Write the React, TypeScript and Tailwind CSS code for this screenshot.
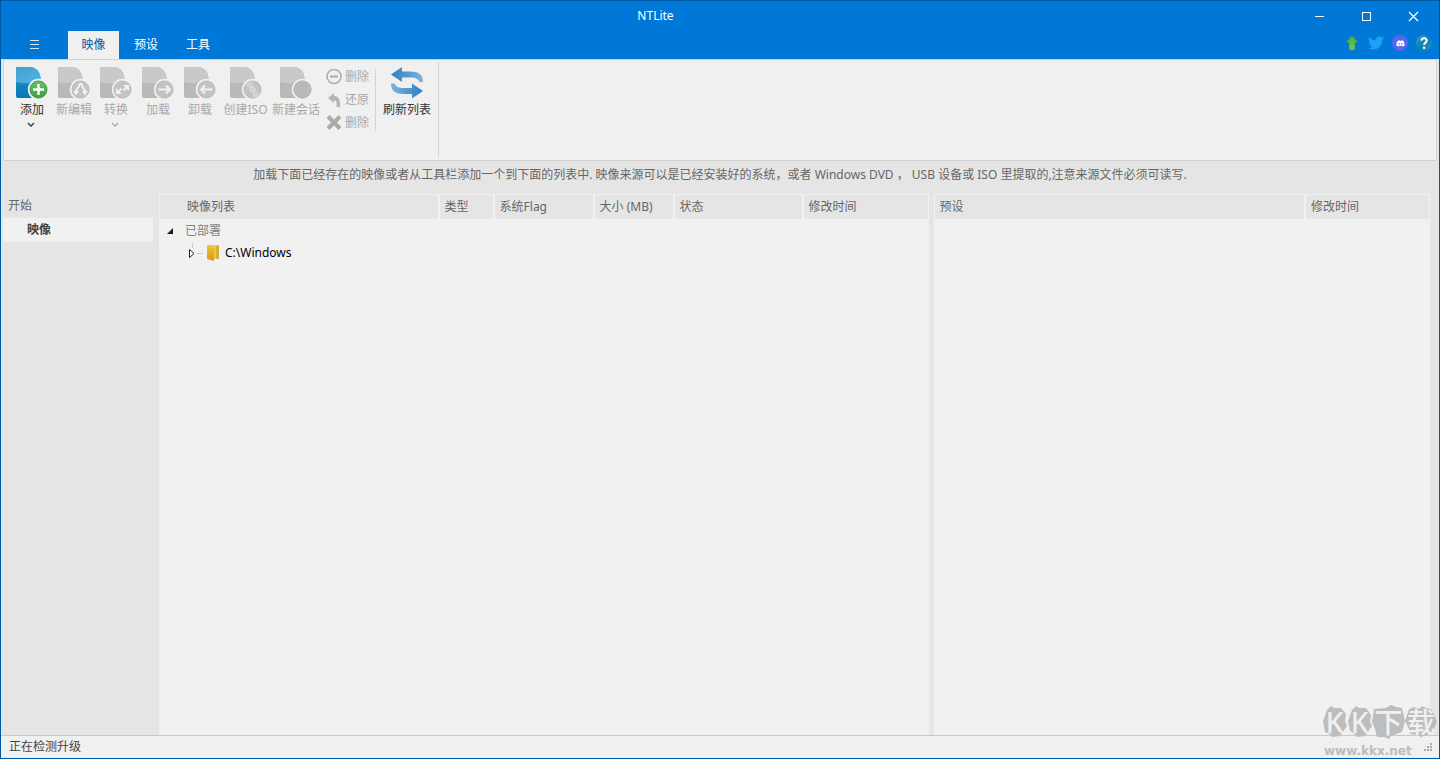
import type { ReactNode } from "react";
import { FaDiscord, FaTwitter } from "react-icons/fa6";

const tabs = ["映像", "预设", "工具"];

const imageColumns = [
  { label: "映像列表", width: "" },
  { label: "类型", width: "w-[55px]" },
  { label: "系统Flag", width: "w-[100px]" },
  { label: "大小 (MB)", width: "w-[80px]" },
  { label: "状态", width: "w-[129px]" },
  { label: "修改时间", width: "w-[124px]" },
];

const presetColumns = [
  { label: "预设", width: "" },
  { label: "修改时间", width: "w-[123px]" },
];

const Gradients = () => (
  <svg className="absolute size-0" aria-hidden="true">
    <defs>
      <linearGradient id="page-blue" x1="0" y1="0" x2="0" y2="1">
        <stop offset="0" stopColor="#2f93c8" />
        <stop offset="1" stopColor="#0079b8" />
      </linearGradient>
      <linearGradient id="gloss-blue" x1="0" y1="0" x2="1" y2="1">
        <stop offset="0" stopColor="#479fce" />
        <stop offset="1" stopColor="#49b5e8" />
      </linearGradient>
      <linearGradient id="green" x1="0" y1="0" x2="0" y2="1">
        <stop offset="0" stopColor="#67c463" />
        <stop offset="1" stopColor="#37a13a" />
      </linearGradient>
      <linearGradient id="arrow-green" x1="0" y1="0" x2="0" y2="1">
        <stop offset="0" stopColor="#46b03c" />
        <stop offset="1" stopColor="#6cc85a" />
      </linearGradient>
      <linearGradient id="help-blue" x1="0" y1="0" x2="1" y2="1">
        <stop offset="0" stopColor="#3f9fcb" />
        <stop offset="0.5" stopColor="#0a7fb4" />
        <stop offset="1" stopColor="#1699c2" />
      </linearGradient>
      <linearGradient id="sync-a" x1="0" y1="0" x2="1" y2="0">
        <stop offset="0" stopColor="#2f7fc0" />
        <stop offset="1" stopColor="#7db4e0" />
      </linearGradient>
      <linearGradient id="sync-b" x1="0" y1="0" x2="1" y2="0">
        <stop offset="0" stopColor="#7db4e0" />
        <stop offset="1" stopColor="#2f7fc0" />
      </linearGradient>
      <linearGradient id="folder" x1="0" y1="0" x2="0" y2="1">
        <stop offset="0" stopColor="#f0c330" />
        <stop offset="1" stopColor="#d99a1c" />
      </linearGradient>
    </defs>
  </svg>
);

const PageIcon = ({ active, children }: { active?: boolean; children?: ReactNode }) => (
  <svg width="32" height="32" viewBox="0 0 32 32" fill="none" aria-hidden="true">
    <path d="M0 0H14C20 0 24.5 5 24.5 12V31H2Q0 31 0 29Z" fill={active ? "url(#page-blue)" : "#b9b9b9"} />
    <path d="M0 0H14C20 0 24.5 5 24.5 12C18 17 8 17 0 15Z" fill={active ? "url(#gloss-blue)" : "#c9c9c9"} />
    <circle cx="22.5" cy="22.5" r="10.7" fill="#f0f0f0" />
    <circle cx="22.5" cy="22.5" r="8.5" fill={active ? "url(#green)" : "#c3c3c3"} stroke={active ? "#4a914c" : "#b8b8b8"} />
    {children}
  </svg>
);

const RibbonButton = ({
  label,
  icon,
  width,
  active,
  menu,
}: {
  label: string;
  icon: ReactNode;
  width: string;
  active?: boolean;
  menu?: boolean;
}) => (
  <button
    type="button"
    disabled={!active}
    className={`flex shrink-0 flex-col items-center whitespace-nowrap ${width} ${active ? "text-[#333333]" : "text-[#a8a8a8]"}`}
  >
    {icon}
    <span className="mt-[3px] h-4 leading-4">{label}</span>
    {menu && (
      <svg width="8" height="5" viewBox="0 0 8 5" className="mt-1 mr-0.5" fill="none" stroke="currentColor" strokeWidth="1.3">
        <path d="M1 1L4 4L7 1" />
      </svg>
    )}
  </button>
);

const SmallButton = ({ label, children }: { label: string; children: ReactNode }) => (
  <button type="button" disabled className="flex h-[23px] shrink-0 items-center gap-[3px] text-[#a8a8a8]">
    <svg width="16" height="16" viewBox="0 0 16 16" fill="none" aria-hidden="true">
      {children}
    </svg>
    {label}
  </button>
);

const HeaderRow = ({ columns, first }: { columns: typeof imageColumns; first: string }) => (
  <thead>
    <tr className="h-6">
      {columns.map((column, index) => (
        <th
          key={column.label}
          className={`border-[#f1f1f1] bg-[#e5e5e5] text-left font-normal whitespace-nowrap text-[#666666] ${column.width} ${
            index === 0 ? first : "pl-[5px]"
          } ${index < columns.length - 1 ? "border-r-2" : ""}`}
        >
          {column.label}
        </th>
      ))}
    </tr>
  </thead>
);

const TitleBar = () => (
  <header className="bg-[#0078d7] text-white">
    <div className="flex h-[30px] items-center pr-0.5">
      <h1 className="flex-1 pl-[14px] text-center">NTLite</h1>
      <button type="button" aria-label="Minimize" className="flex h-full w-[47px] items-center justify-center">
        <svg width="11" height="11" viewBox="0 0 11 11" stroke="white">
          <path d="M1 5.5H10" />
        </svg>
      </button>
      <button type="button" aria-label="Maximize" className="flex h-full w-[47px] items-center justify-center">
        <svg width="11" height="11" viewBox="0 0 11 11" fill="none" stroke="white">
          <rect x="1.5" y="1.5" width="8" height="8" />
        </svg>
      </button>
      <button type="button" aria-label="Close" className="flex h-full w-[47px] items-center justify-center">
        <svg width="11" height="11" viewBox="0 0 11 11" stroke="white" strokeWidth="1.2">
          <path d="M1 1L10 10M10 1L1 10" />
        </svg>
      </button>
    </div>
    <div className="flex h-7 items-stretch">
      <button type="button" aria-label="Menu" className="flex w-[67px] items-center justify-center pb-0.5">
        <svg width="9" height="9" viewBox="0 0 9 9" stroke="#d5e8f8">
          <path d="M0 0.5H9M0 4.5H9M0 8.5H9" />
        </svg>
      </button>
      {tabs.map((tab, index) => (
        <button
          key={tab}
          type="button"
          className={index === 0 ? "mr-px w-[51px] bg-[#f0f0f0] text-[#0058a3]" : "w-[52px]"}
        >
          {tab}
        </button>
      ))}
      <div className="mr-[7px] mb-1 ml-auto flex items-center gap-2">
        <button type="button" aria-label="Update">
          <svg width="16" height="16" viewBox="0 0 16 16" className="block">
            <path d="M8 0.5L14 7.5H11V15H5V7.5H2Z" fill="url(#arrow-green)" stroke="#2f8450" strokeWidth="0.5" />
          </svg>
        </button>
        <a href="#twitter" aria-label="Twitter" className="text-[#1da1f2]">
          <FaTwitter size={16} />
        </a>
        <a href="#discord" aria-label="Discord" className="flex size-4 items-center justify-center rounded-full bg-[#5865f2]">
          <FaDiscord size={9} />
        </a>
        <button type="button" aria-label="Help">
          <svg width="16" height="16" viewBox="0 0 16 16" className="block" fill="none">
            <circle cx="8" cy="8" r="8" fill="url(#help-blue)" />
            <path d="M5.4 5.6C5.6 2.4 10.8 2.3 10.7 5.6C10.6 7.7 8.1 7.6 8.1 10" stroke="white" strokeWidth="2" />
            <circle cx="8.1" cy="12.7" r="1.3" fill="white" />
          </svg>
        </button>
      </div>
    </div>
  </header>
);

const Ribbon = () => (
  <section className="mx-0.5 flex h-[102px] items-start border border-[#d2d2d2] bg-[#f0f0f0] pl-[7px]">
    <div className="flex pt-[7px]">
      <RibbonButton
        label="添加"
        width="w-[42px]"
        active
        menu
        icon={
          <PageIcon active>
            <path d="M22.5 17V28M17 22.5H28" stroke="white" strokeWidth="2.4" />
          </PageIcon>
        }
      />
      <RibbonButton
        label="新编辑"
        width="w-[42px]"
        icon={
          <PageIcon>
            <path
              d="M22.5 16L21 18.5C21 21 18 21.5 18 25M22.5 16L24 18.5C24 21 27 21.5 27 25"
              stroke="#f2f2f2"
              strokeWidth="2"
            />
            <path d="M15 24H21L18 28.5ZM24 24H30L27 28.5Z" fill="#f2f2f2" />
          </PageIcon>
        }
      />
      <RibbonButton
        label="转换"
        width="w-[42px]"
        menu
        icon={
          <PageIcon>
            <path d="M17.5 25.5L21.5 21.5M23.5 23.5L27.5 19.5" stroke="#f2f2f2" strokeWidth="2" />
            <path d="M16 21V27H22ZM29 24V18H23Z" fill="#f2f2f2" />
          </PageIcon>
        }
      />
      <RibbonButton
        label="加载"
        width="w-[42px]"
        icon={
          <PageIcon>
            <path d="M16.5 22.5H28M24 18.5L28 22.5L24 26.5" stroke="#f2f2f2" strokeWidth="2" />
          </PageIcon>
        }
      />
      <RibbonButton
        label="卸载"
        width="w-[42px]"
        icon={
          <PageIcon>
            <path d="M28.5 22.5H17M21 18.5L17 22.5L21 26.5" stroke="#f2f2f2" strokeWidth="2" />
          </PageIcon>
        }
      />
      <RibbonButton
        label="创建ISO"
        width="w-[49px]"
        icon={
          <PageIcon>
            <path d="M22.5 22.5L15 18Q18 14 22.5 14.5ZM22.5 22.5L30 27Q27 31 22.5 30.5Z" fill="#d3d3d3" />
            <circle cx="22.5" cy="22.5" r="2.5" fill="#cfcfcf" stroke="#e2e2e2" />
          </PageIcon>
        }
      />
      <RibbonButton
        label="新建会话"
        width="w-[52px]"
        icon={
          <PageIcon>
            <circle cx="22.5" cy="22.5" r="9" fill="#b9b9b9" />
          </PageIcon>
        }
      />
    </div>
    <div className="mt-[9px] flex h-[62px] border-r border-[#d2d2d2] pr-[6px] pl-1">
      <div className="-mt-1 flex flex-col">
        <SmallButton label="删除">
          <circle cx="8" cy="7.5" r="7" stroke="#ababab" strokeWidth="1.5" />
          <path d="M4 7.5H12" stroke="#ababab" strokeWidth="2" />
        </SmallButton>
        <SmallButton label="还原">
          <path d="M2 6L8 1V4C13 4 14.5 8 14 15H10.5C11 10 10.5 8.5 8 8.5V11Z" fill="#b5b5b5" />
        </SmallButton>
        <SmallButton label="删除">
          <path d="M2 1.5L14 13.5M14 1.5L2 13.5" stroke="#aaaaaa" strokeWidth="4" />
        </SmallButton>
      </div>
    </div>
    <div className="mt-[2px] flex h-[95px] border-r border-[#d2d2d2] px-[5px] pt-[5px]">
      <RibbonButton
        label="刷新列表"
        width="w-[52px]"
        active
        icon={
          <svg width="32" height="32" viewBox="0 0 32 32" aria-hidden="true">
            <path d="M0 7.5L11 0V4.5H20C28 4.5 32 8 32 15H28.5C27 11.5 24 10.5 20 10.5H11V15Z" fill="url(#sync-a)" />
            <path d="M32 24L21 31.5V27H12C4 27 0 23.5 0 16.5H3.5C5 20 8 21 12 21H21V16.5Z" fill="url(#sync-b)" />
          </svg>
        }
      />
    </div>
  </section>
);

const ImageTable = () => (
  <div className="flex-[770] border border-[#f1f1f1] bg-[#f1f1f1]">
    <table className="w-full table-fixed border-separate border-spacing-0">
      <HeaderRow columns={imageColumns} first="pl-[27px]" />
      <tbody>
        <tr className="h-[23px]">
          <td colSpan={6} className="text-[#808080]">
            <div className="flex items-center gap-3 pl-[7px]">
              <svg width="6" height="6" viewBox="0 0 6 6" aria-hidden="true">
                <path d="M6 0V6H0Z" fill="#1a1a1a" />
              </svg>
              已部署
            </div>
          </td>
        </tr>
        <tr className="h-[22px]">
          <td colSpan={6} className="text-black">
            <div className="flex items-center pl-[29px]">
              <svg width="16" height="20" viewBox="0 0 16 20" fill="none" aria-hidden="true">
                <path d="M3.5 0V5M8 10.5H14" stroke="#cccccc" />
                <path d="M0.5 6.5V14.5L5 10.5Z" stroke="#222222" fill="white" />
              </svg>
              <svg width="16" height="16" viewBox="0 0 16 16" className="mr-1" aria-hidden="true">
                <path d="M3 0H14V14H8Z" fill="#e8cb4c" />
                <path d="M11 1H14V14H11Z" fill="#d3ae38" />
                <path d="M2 0H3L9 3V16L2 14Z" fill="url(#folder)" />
              </svg>
              C:\Windows
            </div>
          </td>
        </tr>
      </tbody>
    </table>
  </div>
);

const Watermark = () => (
  <div className="pointer-events-none absolute right-0 bottom-0 h-[54px] w-[117px] text-[#f0f0f0]">
    <svg width="117" height="36" viewBox="0 0 117 36" className="absolute top-0 left-0" fill="#bdbdbd" aria-hidden="true">
      <path d="M5 6L9 2L12 4L19 4L24 10L23 17L25 22L18 32L10 33L8 30L3 28L1 17Z" />
      <path d="M30 6L34 2L37 4L44 4L49 11L48 18L50 22L43 32L35 33L33 30L28 27L26 17Z" />
      <path d="M52 5L64 4L69 1L74 3L80 4L83 17L80 28L69 32L67 35L62 33L55 33L53 25L50 18Z" />
      <path d="M87 5L92 3L97 5L100 2L104 4L109 5L112 10L115 18L110 29L99 33L95 31L88 30L87 25L83 17Z" />
    </svg>
    <div className="absolute top-0 left-0 flex h-9 items-center text-[28px] leading-9 font-medium">
      <span className="w-[25px] text-center">K</span>
      <span className="w-[25px] text-center">K</span>
      <span className="w-[33px] text-center">下</span>
      <span className="w-[32px] text-center">载</span>
    </div>
    <span className="absolute bottom-0 left-[2px] font-['DejaVu_Sans',sans-serif] text-[12px] leading-[13px] font-bold text-[#bdbdbd]">
      www.kkx.net
    </span>
  </div>
);

const App = () => {
  return (
    <div className="relative flex min-h-screen flex-col border border-[#0058a3] bg-[#e5e5e5] font-['Noto_Sans','Noto_Sans_CJK_SC',sans-serif] text-[12px] leading-[18px]">
      <Gradients />
      <TitleBar />
      <Ribbon />
      <p className="h-[33px] pt-[5px] text-center text-[#666666]">
        加载下面已经存在的映像或者从工具栏添加一个到下面的列表中. 映像来源可以是已经安装好的系统，或者 Windows DVD ， USB
        设备或 ISO 里提取的,注意来源文件必须可读写.
      </p>
      <main className="flex flex-1">
        <nav className="w-[158px] shrink-0 pr-1.5 pl-0.5">
          <h2 className="flex h-6 items-center pl-[5px] text-[#666666]">开始</h2>
          <button type="button" className="flex h-6 w-full items-center bg-[#f1f1f1] pl-6 font-bold text-[#404040]">
            映像
          </button>
        </nav>
        <ImageTable />
        <div className="mr-[9px] ml-[5px] flex-[496] border border-[#f1f1f1] bg-[#f1f1f1]">
          <table className="w-full table-fixed border-separate border-spacing-0">
            <HeaderRow columns={presetColumns} first="pl-[5px]" />
          </table>
        </div>
      </main>
      <footer className="flex h-[23px] items-center border-t border-[#c8c8c8] bg-[#f0f0f0] pr-[7px] pl-2 text-[#444444]">
        正在检测升级
        <svg width="8" height="8" viewBox="0 0 8 8" className="ml-auto" fill="#aaaaaa" aria-hidden="true">
          <path d="M6 0H8V2H6ZM3 3H5V5H3ZM6 3H8V5H6ZM0 6H2V8H0ZM3 6H5V8H3ZM6 6H8V8H6Z" />
        </svg>
      </footer>
      <Watermark />
    </div>
  );
};

export default App;
